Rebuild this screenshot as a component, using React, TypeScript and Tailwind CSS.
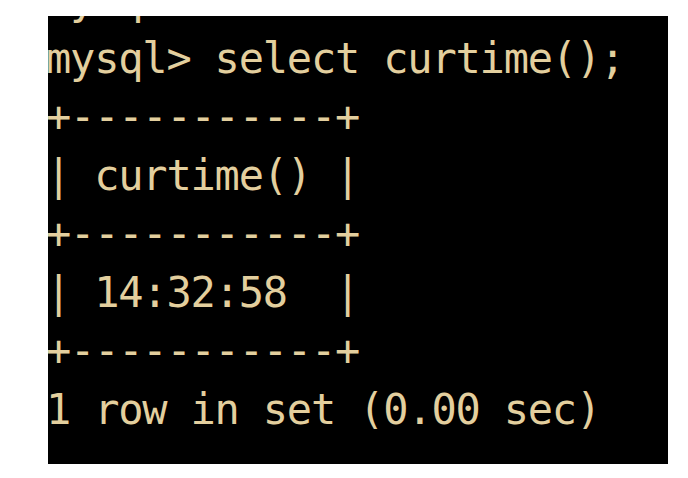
export default function App() {
  const lines = [
    "mysql> ",
    "mysql> select curtime();",
    "+-----------+",
    "| curtime() |",
    "+-----------+",
    "| 14:32:58  |",
    "+-----------+",
    "1 row in set (0.00 sec)",
  ]

  return (
    <main className="min-h-screen w-[688px] h-[478px] bg-white pt-[16px] pl-[48px]">
      <div className="w-[620px] h-[448px] bg-black overflow-hidden">
        <pre
          className="-mt-[45px] -ml-[2px] text-[42px] leading-[58.5px] tracking-[-1.2px] text-[#e3cf9e] whitespace-pre"
          style={{ fontFamily: '"DejaVu Sans Mono", monospace' }}
        >
          {lines.join("\n")}
        </pre>
      </div>
    </main>
  )
}
